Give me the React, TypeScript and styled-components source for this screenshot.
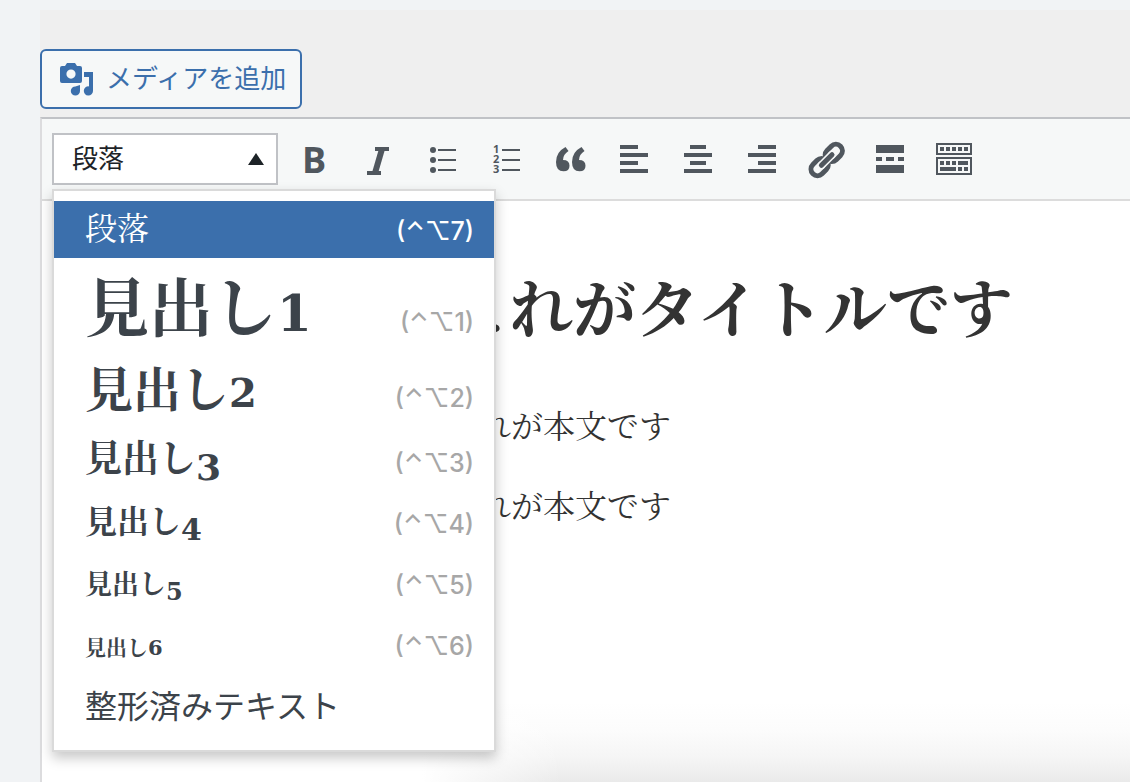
import React from "react";
import styled, { createGlobalStyle } from "styled-components";

const sans = '"Liberation Sans", "Noto Sans CJK JP", sans-serif';
const mincho = '"Liberation Serif", "Noto Serif CJK JP", "Noto Sans CJK JP", serif';
const blue = "#3b6fac";
const icon = "#50575e";

const GlobalStyle = createGlobalStyle`
  *, *::before, *::after { box-sizing: border-box; }
  body { margin: 0; background: #f1f3f5; font-family: ${sans}; }
  button { font: inherit; cursor: pointer; }
`;

const Page = styled.div`
  display: flex;
  min-height: 100vh;
  padding: 10px 0 0 40px;
`;

const Wrap = styled.main`
  flex: 1;
  min-width: 0;
  display: flex;
  flex-direction: column;
  background: #efefef;
`;

const MediaBar = styled.div`
  display: flex;
  padding: 39px 0 8px;
`;

const MediaButton = styled.button`
  display: flex;
  align-items: center;
  gap: 12px;
  height: 60px;
  padding: 0 14px 0 16px;
  border: 2px solid ${blue};
  border-radius: 6px;
  background: #f6f8f8;
  color: ${blue};
  font-size: 26px;
  line-height: 52px;
  white-space: nowrap;
`;

const Editor = styled.section`
  flex: 1;
  display: flex;
  flex-direction: column;
  border-top: 2px solid #c0c2c6;
  border-left: 2px solid #dcdcde;
`;

const Toolbar = styled.div`
  display: flex;
  align-items: center;
  gap: 6px;
  height: 82px;
  padding: 0 10px;
  background: #f6f8f8;
  border-bottom: 2px solid #dcdcdc;
`;

const FormatPicker = styled.div`
  position: relative;
  width: 226px;
`;

const FormatButton = styled.button`
  display: flex;
  align-items: center;
  justify-content: space-between;
  width: 100%;
  height: 52px;
  padding: 0 12px 0 18px;
  border: 2px solid #c0c2c6;
  background: #fff;
  color: #1d2327;
  font-size: 26px;
  line-height: 44px;
`;

const Tools = styled.div`
  display: flex;
  gap: 4px;
  padding-top: 2px;
`;

const Tool = styled.button`
  display: grid;
  place-items: center;
  width: 60px;
  height: 60px;
  padding: 0;
  border: 0;
  background: none;
  color: ${icon};
`;

const BoldMark = styled.span`
  font: 700 36px/48px "Open Sans", sans-serif;
`;

const Menu = styled.div`
  position: absolute;
  top: 56px;
  left: 0;
  z-index: 1;
  width: 444px;
  padding: 10px 0;
  border: 2px solid #dadada;
  background: #fff;
  box-shadow: 0 6px 12px rgba(0, 0, 0, 0.22);
`;

const MenuItem = styled.button<{ $height: number; $active?: boolean }>`
  display: flex;
  align-items: last baseline;
  justify-content: space-between;
  width: 100%;
  height: ${(p) => p.$height}px;
  padding: 0 20px 0 31px;
  border: 0;
  background: ${(p) => (p.$active ? blue : "transparent")};
  color: ${(p) => (p.$active ? "#fff" : "#3c434a")};
  text-align: left;
  white-space: nowrap;
`;

const Label = styled.span<{ $size: number; $bold?: boolean }>`
  font-family: ${mincho};
  font-size: ${(p) => p.$size}px;
  font-weight: ${(p) => (p.$bold ? 700 : 400)};
  line-height: 20px;
`;

/* Old-style figures: 1 and 2 stand at x-height, 3 to 5 hang below the line. */
const Figure = styled.span<{ $size: number; $hangs: boolean }>`
  font-family: "DejaVu Serif", serif;
  font-size: ${(p) => p.$size}px;
  line-height: 0;
  vertical-align: ${(p) => (p.$hangs ? "sub" : "baseline")};
`;

const PreLabel = styled.span`
  font-size: 32px;
  line-height: 66px;
`;

const Shortcut = styled.span<{ $active?: boolean }>`
  font: 500 25px/54px Inter, "DejaVu Sans", sans-serif;
  color: ${(p) => (p.$active ? "#fff" : "#a7a7a7")};
`;

const Content = styled.article`
  flex: 1;
  padding: 64px 0 0 405px;
  background:
    linear-gradient(to right, #fff 380px, rgba(255, 255, 255, 0) 520px),
    linear-gradient(to top, #eaeaea, #f5f5f5 24px, #fcfcfc 52px, #fff 80px);
  color: #333;
  font-family: ${mincho};
  white-space: nowrap;
`;

const Title = styled.h1`
  margin: 0 0 40px;
  font-size: 63px;
  line-height: 92px;
`;

const Paragraph = styled.p`
  margin: 0 0 20px;
  font-size: 32px;
  line-height: 60px;
`;

const MediaIcon = () => (
  <svg width="36" height="36" viewBox="0 0 36 36" fill="currentColor" aria-hidden="true">
    <path
      fillRule="evenodd"
      d="M4 5h3l2-3h8l2 3h3q2 0 2 2v13q0 2-2 2H4q-2 0-2-2V7q0-2 2-2Zm9 3.500a4.600 4.600 0 1 0 0 9.200a4.600 4.600 0 1 0 0-9.200Z"
    />
    <path d="M26 11h9v19a4.600 4.600 0 1 1-4-4.600V16h-5Z" />
    <path d="M22 24v6a4.600 4.600 0 1 1-4.600-4.600Z" />
  </svg>
);

const ItalicIcon = () => (
  <svg width="40" height="40" fill="none" stroke="currentColor" aria-hidden="true">
    <path d="M17 9h14M9 33h14" strokeWidth="4" />
    <path d="M24 9L17 33" strokeWidth="6" />
  </svg>
);

const BulletIcon = () => (
  <svg width="40" height="40" fill="currentColor" aria-hidden="true">
    <circle cx="11" cy="10" r="3" />
    <circle cx="11" cy="20" r="3" />
    <circle cx="11" cy="30" r="3" />
    <path d="M16 9h18v2H16zM16 19h18v2H16zM16 29h18v2H16z" />
  </svg>
);

const NumberText = styled.text`
  font: 700 11px "Open Sans", sans-serif;
`;

const NumberIcon = () => (
  <svg width="40" height="40" fill="currentColor" aria-hidden="true">
    <NumberText x="7" y="13">1</NumberText>
    <NumberText x="7" y="23">2</NumberText>
    <NumberText x="7" y="33">3</NumberText>
    <path d="M16 9h18v2H16zM16 19h18v2H16zM16 29h18v2H16z" />
  </svg>
);

const QuoteIcon = () => (
  <svg width="40" height="40" fill="currentColor" aria-hidden="true">
    <path d="M15.500 7l3 4q-5.500 3.500-5.500 9q6.500 0 6.500 5.700q0 5.600-6 5.600q-7.500 0-7.500-9.300Q6 12 15.500 7Z" />
    <path d="M31.500 7l3 4q-5.500 3.500-5.500 9q6.500 0 6.500 5.700q0 5.600-6 5.600q-7.500 0-7.500-9.300Q22 12 31.500 7Z" />
  </svg>
);

const AlignIcon = ({ d }: { d: string }) => (
  <svg width="40" height="40" stroke="currentColor" strokeWidth="4" aria-hidden="true">
    <path d={d} />
  </svg>
);

const LinkIcon = () => (
  <svg width="40" height="40" fill="none" stroke="currentColor" aria-hidden="true">
    <g transform="rotate(-45 20 20)">
      <rect x="1" y="14" width="19" height="13" rx="6.500" strokeWidth="5" />
      <rect x="21" y="14" width="19" height="13" rx="6.500" strokeWidth="5" />
      <path d="M13 20.500h15" stroke="#f6f8f8" strokeWidth="8" strokeLinecap="round" />
      <path d="M13 20.500h15" strokeWidth="5" strokeLinecap="round" />
    </g>
  </svg>
);

const MoreIcon = () => (
  <svg width="40" height="40" fill="currentColor" aria-hidden="true">
    <path d="M6 5h28v8H6zM6 17h6v4H6zM16 17h8v4h-8zM28 17h6v4h-6zM6 25h28v8H6z" />
  </svg>
);

const KeyboardIcon = () => (
  <svg width="40" height="40" fill="currentColor" aria-hidden="true">
    <path d="M3 4h34v10H3zM3 18h34v16H3z" fill="none" stroke="currentColor" strokeWidth="2" />
    <path d="M6 7h4v4H6zM12 7h4v4h-4zM18 7h4v4h-4zM24 7h4v4h-4zM30 7h4v4h-4z" />
    <path d="M6 21h4v4H6zM12 21h4v4h-4zM18 21h4v4h-4zM24 21h10v4H24zM6 27h16v4H6zM24 27h4v4h-4zM30 27h4v4h-4z" />
  </svg>
);

const tools: { name: string; mark: React.ReactNode }[] = [
  { name: "太字", mark: <BoldMark>B</BoldMark> },
  { name: "イタリック", mark: <ItalicIcon /> },
  { name: "番号なしリスト", mark: <BulletIcon /> },
  { name: "番号付きリスト", mark: <NumberIcon /> },
  { name: "引用", mark: <QuoteIcon /> },
  { name: "左寄せ", mark: <AlignIcon d="M6 7h18M6 15h28M6 23h18M6 31h28" /> },
  { name: "中央揃え", mark: <AlignIcon d="M12 7h16M6 15h28M12 23h16M6 31h28" /> },
  { name: "右寄せ", mark: <AlignIcon d="M16 7h18M6 15h28M16 23h18M6 31h28" /> },
  { name: "リンクの挿入", mark: <LinkIcon /> },
  { name: "続きを読む", mark: <MoreIcon /> },
  { name: "ツールバー切り替え", mark: <KeyboardIcon /> },
];

const headings = [
  { level: 1, size: 64, figure: 50, height: 91 },
  { level: 2, size: 48, figure: 40, height: 76 },
  { level: 3, size: 37, figure: 36, height: 65 },
  { level: 4, size: 32, figure: 30, height: 61 },
  { level: 5, size: 27, figure: 24, height: 61 },
  { level: 6, size: 21, figure: 21, height: 61 },
];

export default function App() {
  return (
    <Page lang="ja">
      <GlobalStyle />
      <Wrap>
        <MediaBar>
          <MediaButton type="button">
            <MediaIcon />
            メディアを追加
          </MediaButton>
        </MediaBar>
        <Editor>
          <Toolbar role="toolbar">
            <FormatPicker>
              <FormatButton type="button" aria-haspopup="menu" aria-expanded="true">
                段落
                <svg width="16" height="12" aria-hidden="true">
                  <path d="M8 0l8 12H0z" fill="#1d2327" />
                </svg>
              </FormatButton>
              <Menu role="menu">
                <MenuItem type="button" role="menuitem" $height={57} $active>
                  <Label $size={32}>段落</Label>
                  <Shortcut $active>(⌃⌥7)</Shortcut>
                </MenuItem>
                {headings.map((h) => (
                  <MenuItem key={h.level} type="button" role="menuitem" $height={h.height}>
                    <Label $size={h.size} $bold>
                      見出し
                      <Figure $size={h.figure} $hangs={h.level > 2 && h.level < 6}>
                        {h.level}
                      </Figure>
                    </Label>
                    <Shortcut>(⌃⌥{h.level})</Shortcut>
                  </MenuItem>
                ))}
                <MenuItem type="button" role="menuitem" $height={67}>
                  <PreLabel>整形済みテキスト</PreLabel>
                </MenuItem>
              </Menu>
            </FormatPicker>
            <Tools>
              {tools.map((t) => (
                <Tool key={t.name} type="button" aria-label={t.name}>
                  {t.mark}
                </Tool>
              ))}
            </Tools>
          </Toolbar>
          <Content>
            <Title>これがタイトルです</Title>
            <Paragraph>これが本文です</Paragraph>
            <Paragraph>これが本文です</Paragraph>
          </Content>
        </Editor>
      </Wrap>
    </Page>
  );
}
